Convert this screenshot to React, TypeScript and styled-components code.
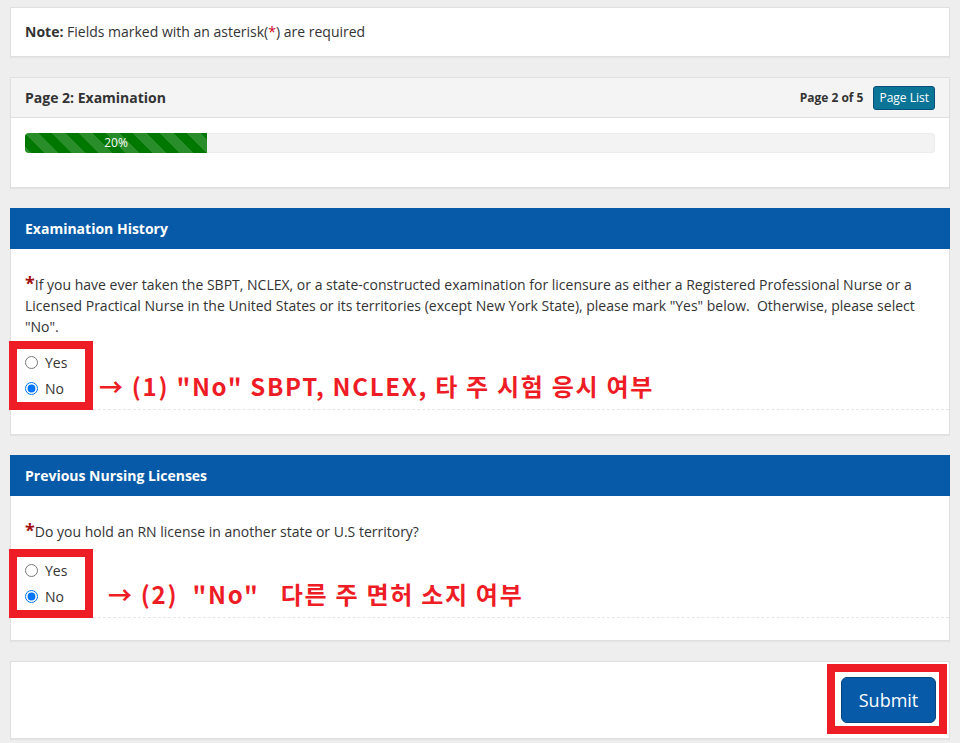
import * as React from 'react';
import styled, { createGlobalStyle } from 'styled-components';

const GlobalStyle = createGlobalStyle`
  html, body {
    margin: 0;
    padding: 0;
    background: #eeeeee;
  }
  body {
    font-family: "Open Sans", "Noto Sans", sans-serif;
    font-size: 14px;
    line-height: 1.5;
    color: #333;
  }
  * {
    box-sizing: border-box;
  }
`;

type Question = {
  name: string;
  title: string;
  text: string;
  note: string;
  noteIndent: number;
  gap: number;
  bottom: number;
};

const questions: Question[] = [
  {
    name: 'exam',
    title: 'Examination History',
    text:
      'If you have ever taken the SBPT, NCLEX, or a state-constructed examination for licensure as either a Registered Professional Nurse or a Licensed Practical Nurse in the United States or its territories (except New York State), please mark "Yes" below.\u00a0 Otherwise, please select "No".',
    note: '→ (1) "No" SBPT, NCLEX, 타 주 시험 응시 여부',
    noteIndent: 6,
    gap: 4,
    bottom: 24,
  },
  {
    name: 'license',
    title: 'Previous Nursing Licenses',
    text: 'Do you hold an RN license in another state or U.S territory?',
    note: '→ (2)  "No"   다른 주 면허 소지 여부',
    noteIndent: 15,
    gap: 7,
    bottom: 22,
  },
];

const App: React.FC = () => {
  const progress = 20;

  return (
    <>
      <GlobalStyle />
      <Page>
        <Card>
          <NoteBody>
            <b>Note:</b> Fields marked with an asterisk(<Star>*</Star>) are required
          </NoteBody>
        </Card>

        <Card>
          <GreyHeader>
            <span>Page 2: Examination</span>
            <PageNav>
              <PageCount>Page 2 of 5</PageCount>
              <PageListButton type="button">Page List</PageListButton>
            </PageNav>
          </GreyHeader>
          <ProgressBody>
            <ProgressTrack>
              <ProgressFill style={{ width: `${progress}%` }}>{progress}%</ProgressFill>
            </ProgressTrack>
          </ProgressBody>
        </Card>

        {questions.map((q) => (
          <Card key={q.name}>
            <BlueHeader>{q.title}</BlueHeader>
            <QuestionBody bottom={q.bottom}>
              <QuestionText>
                <Required>*</Required>
                {q.text}
              </QuestionText>
              <AnswerRow gap={q.gap}>
                <Highlight>
                  <RadioLabel>
                    <input type="radio" name={q.name} value="yes" />
                    Yes
                  </RadioLabel>
                  <RadioLabel>
                    <input type="radio" name={q.name} value="no" defaultChecked />
                    No
                  </RadioLabel>
                </Highlight>
                <Annotation indent={q.noteIndent}>{q.note}</Annotation>
              </AnswerRow>
            </QuestionBody>
          </Card>
        ))}

        <Card>
          <SubmitBody>
            <SubmitHighlight>
              <SubmitButton type="button">Submit</SubmitButton>
            </SubmitHighlight>
          </SubmitBody>
        </Card>
      </Page>
    </>
  );
};

export default App;

const Page = styled.div`
  padding: 7px 10px 4px;
  display: flex;
  flex-direction: column;
  gap: 20px;
`;

const Card = styled.div`
  background: #fff;
  border: 1px solid #e0e0e0;
  box-shadow: 0 1px 1px rgba(0, 0, 0, 0.04);
`;

const NoteBody = styled.div`
  padding: 13px 14px 14px;
`;

const Star = styled.span`
  color: #d0021b;
`;

const GreyHeader = styled.div`
  height: 40px;
  padding: 0 14px;
  background: #f4f4f4;
  border-bottom: 1px solid #dedede;
  display: flex;
  align-items: center;
  justify-content: space-between;
  font-weight: 700;
`;

const PageNav = styled.div`
  display: flex;
  align-items: center;
  gap: 10px;
`;

const PageCount = styled.span`
  font-size: 12px;
  font-weight: 700;
`;

const PageListButton = styled.button`
  height: 24px;
  padding: 0 5px;
  font-family: inherit;
  font-size: 12px;
  color: #fff;
  background: #0b7597;
  border: 1px solid #0a4f7a;
  border-radius: 3px;
`;

const ProgressBody = styled.div`
  padding: 15px 14px 34px;
`;

const ProgressTrack = styled.div`
  height: 20px;
  background: #f3f3f3;
  border-radius: 4px;
  overflow: hidden;
  box-shadow: inset 0 0 0 1px #ececec;
`;

const ProgressFill = styled.div`
  height: 100%;
  background-color: #007800;
  background-image: linear-gradient(
    45deg,
    rgba(255, 255, 255, 0.16) 25%,
    transparent 25%,
    transparent 50%,
    rgba(255, 255, 255, 0.16) 50%,
    rgba(255, 255, 255, 0.16) 75%,
    transparent 75%,
    transparent
  );
  background-size: 27px 27px;
  color: #fff;
  font-size: 12px;
  line-height: 20px;
  text-align: center;
`;

const BlueHeader = styled.div`
  height: 41px;
  margin: -1px -1px 0;
  padding: 0 15px;
  background: #065aa8;
  color: #fff;
  font-weight: 700;
  display: flex;
  align-items: center;
`;

const QuestionBody = styled.div<{ bottom: number }>`
  padding: 25px 14px ${(p) => p.bottom}px;
`;

const QuestionText = styled.div`
  line-height: 21px;
`;

const Required = styled.span`
  color: #a50e0e;
  font-size: 18px;
  font-weight: 700;
  line-height: 0;
`;

const AnswerRow = styled.div<{ gap: number }>`
  margin-top: ${(p) => p.gap}px;
  margin-left: -16px;
  margin-right: -14px;
  display: flex;
  align-items: stretch;
`;

const Highlight = styled.div`
  width: 84px;
  border: 8px solid #ee1c25;
  padding: 0 0 0 8px;
  display: flex;
  flex-direction: column;
`;

const RadioLabel = styled.label`
  height: 26.5px;
  display: flex;
  align-items: center;
  gap: 7px;

  input {
    width: 13px;
    height: 13px;
    margin: 0;
  }
`;

const Annotation = styled.div<{ indent: number }>`
  flex: 1;
  padding: 0 0 8px ${(p) => p.indent}px;
  border-bottom: 1px dashed #e6e6e6;
  display: flex;
  align-items: flex-end;
  white-space: pre;
  color: #ee1c25;
  font-family: "Noto Sans CJK KR", "Noto Sans", sans-serif;
  font-weight: 700;
  font-size: 24px;
  letter-spacing: 1.7px;
  line-height: 30px;
`;

const SubmitBody = styled.div`
  padding: 2px 2px 4px;
  display: flex;
  justify-content: flex-end;
`;

const SubmitHighlight = styled.div`
  border: 8px solid #ee1c25;
  padding: 5px 3px 3px 6px;
`;

const SubmitButton = styled.button`
  width: 95px;
  height: 46px;
  font-family: "Open Sans", sans-serif;
  font-size: 18px;
  color: #fff;
  background: #065aa8;
  border: 1px solid #04457f;
  border-radius: 6px;
`;
